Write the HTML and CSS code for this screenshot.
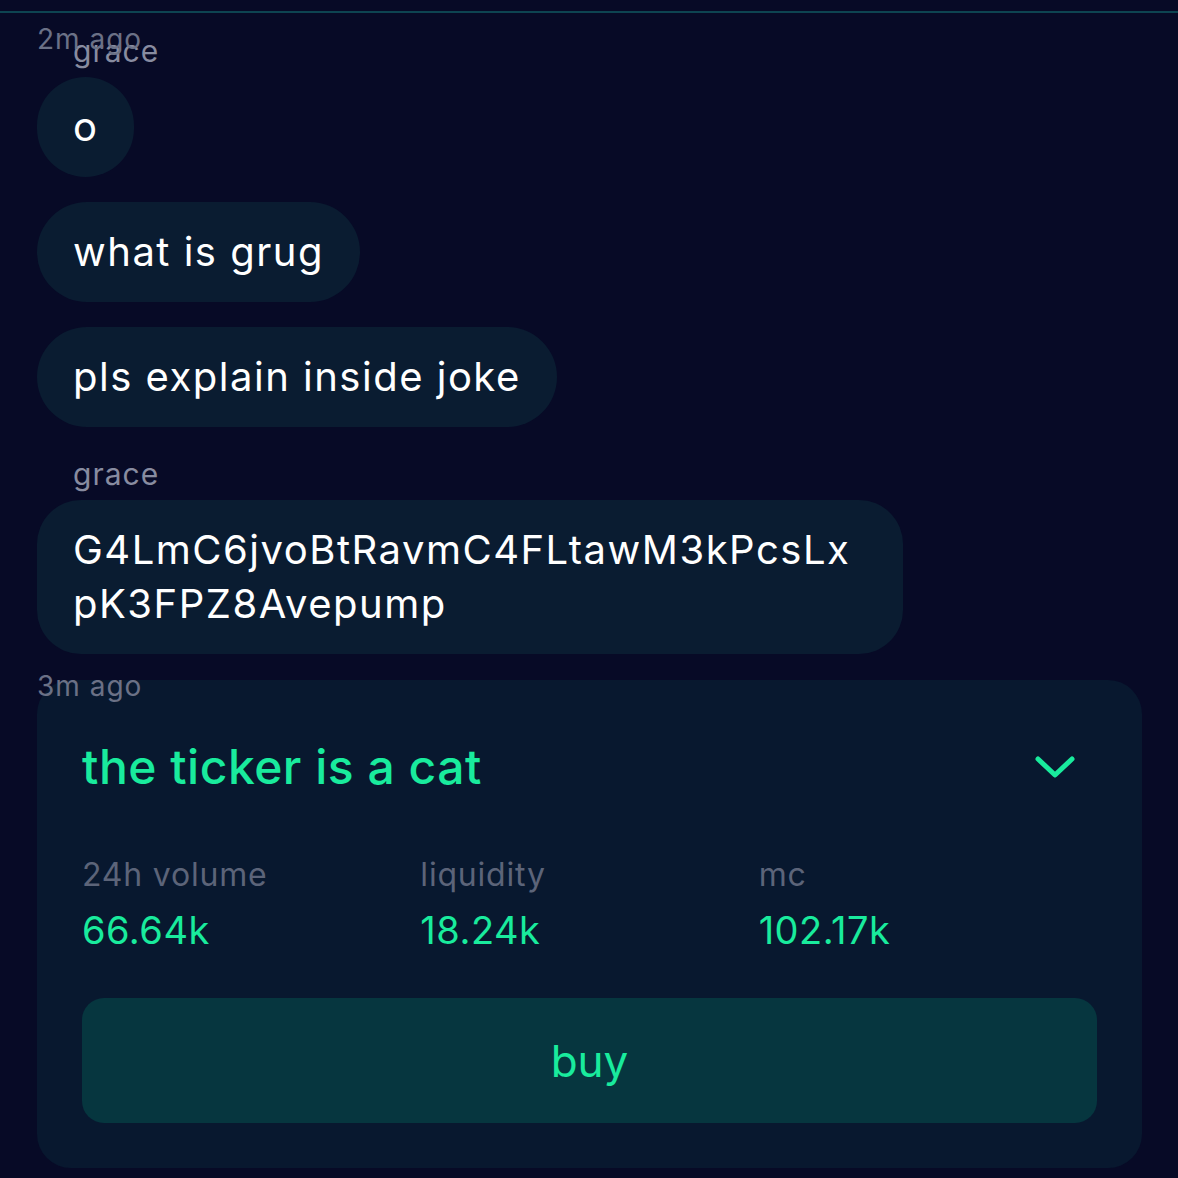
FILE: index.html
```html
<!DOCTYPE html>
<html lang="en">
<head>
    <meta charset="UTF-8">
    <title>chat</title>
    <link rel="stylesheet" href="styles.css">
</head>
<body>
    <div id="chat">
        <div class="group">
            <span class="stamp">2m ago</span>
            <div class="sender">grace</div>
            <div class="bubble">o</div>
            <div class="bubble">what is grug</div>
            <div class="bubble">pls explain inside joke</div>
            <div class="sender next">grace</div>
            <div class="bubble addr">G4LmC6jvoBtRavmC4FLtawM3kPcsLxpK3FPZ8Avepump</div>
        </div>
        <div class="group">
            <span class="stamp">3m ago</span>
            <div class="card">
                <div class="cardHead">
                    <span class="title">the ticker is a cat</span>
                    <svg class="chevron" width="44" height="28" viewBox="0 0 44 28">
                        <path d="M5 6 L22 22 L39 6" fill="none" stroke="#19eb9d" stroke-width="5" stroke-linecap="round" stroke-linejoin="round"/>
                    </svg>
                </div>
                <div class="stats">
                    <div class="stat">
                        <div class="label">24h volume</div>
                        <div class="value">66.64k</div>
                    </div>
                    <div class="stat">
                        <div class="label">liquidity</div>
                        <div class="value">18.24k</div>
                    </div>
                    <div class="stat">
                        <div class="label">mc</div>
                        <div class="value">102.17k</div>
                    </div>
                </div>
                <div class="buyBtn">buy</div>
            </div>
        </div>
    </div>
</body>
</html>
```

FILE: styles.css
```css
* {
    padding: 0;
    margin: 0;
    box-sizing: border-box;
}
body {
    background-color: #070a26;
    font-family: Inter, "Noto Sans", sans-serif;
    height: 1178px;
    overflow: hidden;
}
#chat {
    margin-top: 11px;
    border-top: 2px solid #0d4451;
    padding: 20px 36px 0 37px;
    display: flex;
    flex-direction: column;
    gap: 26px;
}
.group {
    position: relative;
    display: flex;
    flex-direction: column;
    align-items: flex-start;
    gap: 25px;
}
/* timestamp sits on top of the first row */
.stamp {
    position: absolute;
    left: 0;
    top: -10px;
    font-size: 28px;
    letter-spacing: 1px;
    color: #6b7186;
    line-height: 32px;
    z-index: 1;
}
.sender {
    margin-left: 36px;
    margin-bottom: -17px;
    font-size: 30px;
    letter-spacing: 1px;
    line-height: 36px;
    color: #888ca0;
}
.sender.next {
    margin-top: 4px;
}
.bubble {
    background-color: #0a1c31;
    color: #fff;
    font-size: 40px;
    letter-spacing: 1.5px;
    line-height: 54px;
    padding: 23px 36px;
    border-radius: 50px;
}
.addr {
    width: 866px;
    word-break: break-all;
    border-radius: 44px;
}
.card {
    width: 1105px;
    background-color: #08182f;
    border-radius: 34px;
    padding: 44px 45px 45px;
}
.cardHead {
    display: flex;
    align-items: center;
    justify-content: space-between;
}
.title {
    color: #19eb9d;
    font-size: 48px;
    letter-spacing: 0.5px;
    font-weight: 500;
    line-height: 86px;
}
.chevron {
    margin-right: 20px;
}
.stats {
    display: grid;
    grid-template-columns: 1fr 1fr 1fr;
    margin-top: 43px;
}
.label {
    color: #5c6479;
    font-size: 32px;
    letter-spacing: 0.8px;
    line-height: 44px;
}
.value {
    color: #19eb9d;
    font-size: 38px;
    letter-spacing: 0.5px;
    line-height: 50px;
    margin-top: 8px;
}
.buyBtn {
    margin-top: 43px;
    height: 125px;
    border-radius: 22px;
    background-color: #06363f;
    color: #19eb9d;
    font-size: 44px;
    display: flex;
    align-items: center;
    justify-content: center;
}
```
